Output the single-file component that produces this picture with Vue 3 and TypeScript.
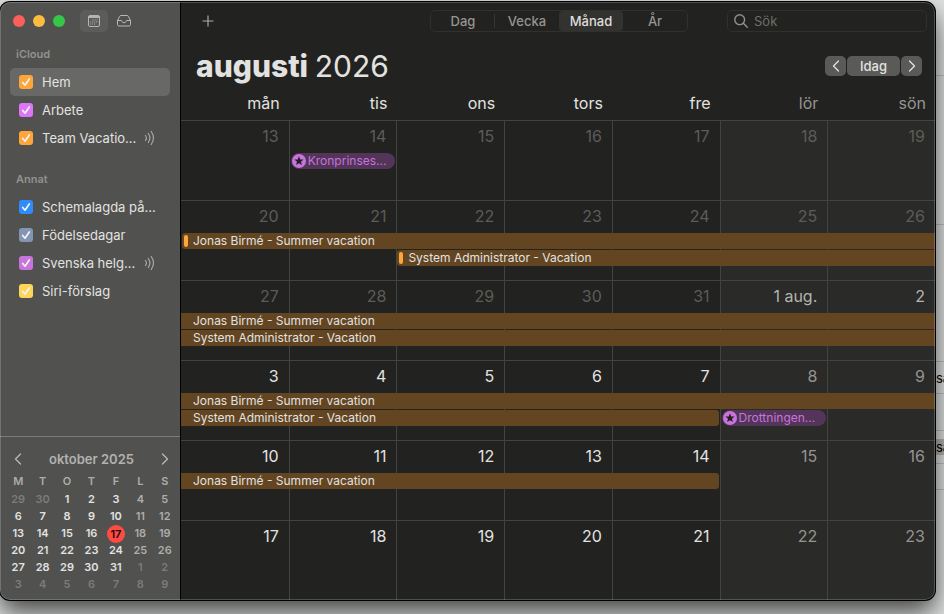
<script setup lang="ts">
interface Calendar {
  name: string
  color: string
  shared?: boolean
  selected?: boolean
}

interface CalendarGroup {
  title: string
  calendars: Calendar[]
}

interface CalendarEvent {
  title: string
  start: number
  span: number
  row: number
  kind: 'bar' | 'holiday'
  begins?: boolean
  ends?: boolean
}

interface Week {
  days: string[]
  muted: number
  events: CalendarEvent[]
}

const groups: CalendarGroup[] = [
  {
    title: 'iCloud',
    calendars: [
      { name: 'Hem', color: '#ffa63a', selected: true },
      { name: 'Arbete', color: '#dc76f7' },
      { name: 'Team Vacatio...', color: '#ffa63a', shared: true },
    ],
  },
  {
    title: 'Annat',
    calendars: [
      { name: 'Schemalagda på...', color: '#2f8cfb' },
      { name: 'Födelsedagar', color: '#8495b3' },
      { name: 'Svenska helg...', color: '#c973dc', shared: true },
      { name: 'Siri-förslag', color: '#fdd559' },
    ],
  },
]

const views: string[] = ['Dag', 'Vecka', 'Månad', 'År']
const activeView = 'Månad'
const weekdays: string[] = ['mån', 'tis', 'ons', 'tors', 'fre', 'lör', 'sön']

const jonas = 'Jonas Birmé - Summer vacation'
const admin = 'System Administrator - Vacation'

// `muted` is the number of leading days that belong to the previous month.
const weeks: Week[] = [
  {
    days: ['13', '14', '15', '16', '17', '18', '19'],
    muted: 7,
    events: [{ title: 'Kronprinses...', start: 2, span: 1, row: 2, kind: 'holiday' }],
  },
  {
    days: ['20', '21', '22', '23', '24', '25', '26'],
    muted: 7,
    events: [
      { title: jonas, start: 1, span: 7, row: 2, kind: 'bar', begins: true },
      { title: admin, start: 3, span: 5, row: 3, kind: 'bar', begins: true },
    ],
  },
  {
    days: ['27', '28', '29', '30', '31', '1 aug.', '2'],
    muted: 5,
    events: [
      { title: jonas, start: 1, span: 7, row: 2, kind: 'bar' },
      { title: admin, start: 1, span: 7, row: 3, kind: 'bar' },
    ],
  },
  {
    days: ['3', '4', '5', '6', '7', '8', '9'],
    muted: 0,
    events: [
      { title: jonas, start: 1, span: 7, row: 2, kind: 'bar' },
      { title: admin, start: 1, span: 5, row: 3, kind: 'bar', ends: true },
      { title: 'Drottningen...', start: 6, span: 1, row: 3, kind: 'holiday' },
    ],
  },
  {
    days: ['10', '11', '12', '13', '14', '15', '16'],
    muted: 0,
    events: [{ title: jonas, start: 1, span: 5, row: 2, kind: 'bar', ends: true }],
  },
  {
    days: ['17', '18', '19', '20', '21', '22', '23'],
    muted: 0,
    events: [],
  },
]

const miniHeads: string[] = ['M', 'T', 'O', 'T', 'F', 'L', 'S']

// Six weeks starting on Monday 29 September 2025.
const miniWeeks = Array.from({ length: 6 }, (_, w) =>
  Array.from({ length: 7 }, (_, d) => {
    const n = w * 7 + d - 1
    return {
      label: n < 1 ? n + 30 : n > 31 ? n - 31 : n,
      outside: n < 1 || n > 31,
      weekend: d > 4,
      today: n === 17,
    }
  }),
)

// Rows of the document that shows behind the window's right edge.
const paperRows: { height: number; text?: string; marked?: boolean }[] = [
  { height: 76 },
  { height: 149 },
  { height: 137 },
  { height: 32, text: 'sa' },
  { height: 37 },
  { height: 33, text: 'sa', marked: true },
  { height: 26 },
]
</script>

<template>
  <div class="desktop">
    <div class="paper" aria-hidden="true">
      <div v-for="(row, i) in paperRows" :key="i" class="paper-row" :style="{ height: row.height + 'px' }">
        <span v-if="row.text" :class="{ marked: row.marked }">{{ row.text }}</span>
      </div>
    </div>

    <div class="window">
      <aside class="sidebar">
        <div class="titlebar">
          <div class="lights">
            <button class="light close" aria-label="Stäng"></button>
            <button class="light minimize" aria-label="Minimera"></button>
            <button class="light expand" aria-label="Zooma"></button>
          </div>
          <button class="tool pressed" aria-label="Kalendrar">
            <svg width="14" height="14" viewBox="0 0 14 14" fill="none">
              <rect x="1.5" y="1.5" width="11" height="11" rx="1.5" stroke="#b4b4b2" />
              <path d="M1.5 2.5h11M1.5 3.5h11" stroke="#b4b4b2" />
              <path d="M5.5 6h6M3 8h8.500M3 10h6" stroke="#a0a09e" stroke-width="1.200" stroke-dasharray="1.200 .8" />
            </svg>
          </button>
          <button class="tool" aria-label="Inkorg">
            <svg width="16" height="14" viewBox="0 0 16 14" fill="none" stroke="#b8b8b6" stroke-linejoin="round">
              <path d="M1.500 6.500 3.600 2.400Q4 1.500 5 1.500h6q1 0 1.400.9l2.100 4.100v4q0 1.500-1.500 1.500H3q-1.500 0-1.500-1.500z" />
              <path d="M1.500 6.500h3.800q.5 0 .6.600.4 1.700 2.100 1.700t2.100-1.700q.1-.6.600-.6h3.800" />
            </svg>
          </button>
        </div>

        <section v-for="group in groups" :key="group.title" class="group">
          <h2>{{ group.title }}</h2>
          <label
            v-for="cal in group.calendars"
            :key="cal.name"
            class="calendar"
            :class="{ selected: cal.selected }"
          >
            <input type="checkbox" checked :style="{ backgroundColor: cal.color }" />
            <span>{{ cal.name }}</span>
            <svg v-if="cal.shared" class="waves" width="12" height="16" viewBox="0 0 12 16" fill="none" stroke="#a9a9a7" stroke-width="1.200" stroke-linecap="round">
              <path d="M1.500 5.500q1.800 2.500 0 5M4.300 3.500q3.200 4.500 0 9M7.200 1.500q4.600 6.500 0 13" />
            </svg>
          </label>
        </section>

        <section class="mini">
          <header>
            <button aria-label="Föregående månad">
              <svg width="8" height="12" viewBox="0 0 8 12"><path d="M6.500 1 1.500 6l5 5" /></svg>
            </button>
            <h3>oktober 2025</h3>
            <button aria-label="Nästa månad">
              <svg width="8" height="12" viewBox="0 0 8 12"><path d="m1.500 1 5 5-5 5" /></svg>
            </button>
          </header>
          <table>
            <thead>
              <tr>
                <th v-for="(h, i) in miniHeads" :key="i">{{ h }}</th>
              </tr>
            </thead>
            <tbody>
              <tr v-for="(week, w) in miniWeeks" :key="w">
                <td v-for="(day, d) in week" :key="d">
                  <span :class="{ outside: day.outside, weekend: day.weekend, today: day.today }">{{ day.label }}</span>
                </td>
              </tr>
            </tbody>
          </table>
        </section>
      </aside>

      <main class="main">
        <div class="toolbar">
          <button class="add" aria-label="Ny aktivitet">
            <svg width="12" height="12" viewBox="0 0 12 12"><path d="M6 .5v11M.5 6h11" stroke="#a9a9a7" stroke-width="1.200" /></svg>
          </button>
          <nav class="views">
            <button v-for="view in views" :key="view" :class="{ active: view === activeView }">{{ view }}</button>
          </nav>
          <label class="search">
            <svg width="14" height="14" viewBox="0 0 14 14" fill="none" stroke="#90908e" stroke-width="1.400" stroke-linecap="round">
              <circle cx="5.700" cy="5.700" r="4.900" />
              <path d="m9.300 9.300 4 4" />
            </svg>
            <input type="search" placeholder="Sök" aria-label="Sök" />
          </label>
        </div>

        <div class="heading">
          <h1>augusti <span>2026</span></h1>
          <div class="pager">
            <button aria-label="Föregående">
              <svg width="8" height="12" viewBox="0 0 8 12"><path d="M6.500 1 1.500 6l5 5" /></svg>
            </button>
            <button class="today-button">Idag</button>
            <button aria-label="Nästa">
              <svg width="8" height="12" viewBox="0 0 8 12"><path d="m1.500 1 5 5-5 5" /></svg>
            </button>
          </div>
        </div>

        <div class="weekdays">
          <span v-for="(day, i) in weekdays" :key="day" :class="{ weekend: i > 4 }">{{ day }}</span>
        </div>

        <div class="month">
          <div v-for="(week, w) in weeks" :key="w" class="week">
            <div
              v-for="(day, d) in week.days"
              :key="d"
              class="day"
              :class="['col-' + (d + 1), { weekend: d > 4, muted: d < week.muted, first: d > 4 && week.muted === 5 }]"
            >
              {{ day }}
            </div>
            <div
              v-for="(event, e) in week.events"
              :key="'e' + e"
              class="event"
              :class="[event.kind, { begins: event.begins, ends: event.ends }]"
              :style="{ gridColumn: `${event.start} / span ${event.span}`, gridRow: event.row }"
            >
              <svg v-if="event.kind === 'holiday'" width="14" height="14" viewBox="0 0 14 14">
                <circle cx="7" cy="7" r="7" fill="#c973dc" />
                <path d="m7 2.300 1.200 3.100 3.400.2L9 7.700l.9 3.400L7 9.200l-2.900 1.900L5 7.700 2.400 5.600l3.400-.2z" fill="#222220" />
              </svg>
              <span>{{ event.title }}</span>
            </div>
          </div>
        </div>
      </main>
    </div>
  </div>
</template>

<style>
body {
  margin: 0;
}
</style>

<style scoped>
.desktop {
  position: relative;
  box-sizing: border-box;
  min-height: 100vh;
  display: flex;
  padding: 2px 9px 14px 0;
  overflow: hidden;
  background: #dfe1e1;
  font-family: Inter, "Liberation Sans", sans-serif;
  color: #e2e2e0;
}

.paper {
  position: absolute;
  top: 0;
  right: 0;
  bottom: 0;
  width: 8px;
  overflow: hidden;
  color: #000;
  font-size: 13px;
}

.paper-row {
  box-sizing: border-box;
  display: flex;
  align-items: center;
  border-bottom: 1px solid #bdbec2;
}

.paper-row .marked {
  background: #b4b4b4;
}

.window {
  position: relative;
  flex: 1;
  display: flex;
  min-width: 0;
  border-radius: 10px;
  overflow: hidden;
  background: #222220;
  box-shadow: 0 0 0 1px #000, 0 12px 26px rgba(0, 0, 0, 0.7);
}

/* Light rim drawn over the content at the window's edge. */
.window::after {
  content: "";
  position: absolute;
  inset: 0;
  border: 1px solid rgba(255, 255, 255, 0.2);
  border-radius: 10px;
  pointer-events: none;
}

button {
  margin: 0;
  padding: 0;
  border: 0;
  background: none;
  color: inherit;
  font: inherit;
  display: flex;
  align-items: center;
  justify-content: center;
}

h1,
h2,
h3 {
  margin: 0;
}

.sidebar {
  flex: 0 0 181px;
  min-width: 0;
  box-sizing: border-box;
  display: flex;
  flex-direction: column;
  border-right: 1px solid #000;
  background: #51514f;
}

.titlebar {
  display: flex;
  align-items: center;
  padding: 8px 0 0 13px;
  height: 22px;
}

.lights {
  display: flex;
  gap: 8px;
  margin-right: 15px;
}

.light {
  width: 12px;
  height: 12px;
  border-radius: 50%;
}

.close {
  background: #ff5f5a;
}

.minimize {
  background: #fdbc40;
}

.expand {
  background: #34c748;
}

.tool {
  width: 28px;
  height: 22px;
  border-radius: 5px;
}

.tool.pressed {
  background: #5c5c5a;
  margin-right: 2px;
}

.group {
  padding: 13px 10px 0;
}

.group + .group {
  padding-top: 18px;
}

.group h2 {
  margin: 0 0 5px 6px;
  font-size: 11px;
  line-height: 18px;
  font-weight: 600;
  color: #929290;
}

.calendar {
  display: flex;
  align-items: center;
  height: 28px;
  padding: 0 14px 0 9px;
  border-radius: 5px;
  font-size: 13px;
  white-space: nowrap;
}

.calendar.selected {
  background: #686866;
}

.calendar input {
  appearance: none;
  flex: none;
  width: 14px;
  height: 14px;
  margin: 0 9px 0 0;
  border-radius: 3px;
  background-image: url("data:image/svg+xml,%3Csvg xmlns='http://www.w3.org/2000/svg' viewBox='0 0 14 14' fill='none' stroke='%23f4f4f4' stroke-width='1.700' stroke-linecap='round' stroke-linejoin='round'%3E%3Cpath d='m3.700 7.500 2.300 2.700 4.300-6.300'/%3E%3C/svg%3E");
}

.waves {
  flex: none;
  margin-left: auto;
}

.mini {
  margin-top: auto;
  padding: 13px 3px 7px 6px;
  border-top: 1px solid #7c7c7a;
}

.mini header {
  display: flex;
  align-items: center;
  justify-content: space-between;
  height: 18px;
  padding: 0 8px;
  margin-bottom: 3px;
}

.mini h3 {
  font-size: 13px;
  font-weight: 600;
  color: #b2b2b0;
}

.mini svg,
.pager svg {
  fill: none;
  stroke: #b8b8b6;
  stroke-width: 1.300;
  stroke-linecap: round;
  stroke-linejoin: round;
}

.mini table {
  width: 100%;
  table-layout: fixed;
  border-collapse: collapse;
  font-size: 11px;
  line-height: 17px;
  font-weight: 600;
  text-align: center;
}

.mini th,
.mini td {
  padding: 0;
  height: 17px;
}

.mini th {
  height: 20px;
  font-weight: 600;
  color: #adadab;
}

.mini td span {
  display: block;
}

.mini .weekend {
  color: #adadab;
}

.mini .outside {
  color: #7c7c7a;
}

.mini .today {
  width: 18px;
  height: 18px;
  line-height: 18px;
  margin: -1px auto;
  border-radius: 50%;
  background: #ff4b42;
  color: #1c0806;
}

.main {
  flex: 1;
  min-width: 0;
  display: flex;
  flex-direction: column;
}

.toolbar {
  display: flex;
  align-items: center;
  height: 22px;
  padding: 8px 8px 0 21px;
}

.views {
  display: grid;
  grid-template-columns: repeat(4, 64px);
  margin-left: auto;
  box-sizing: border-box;
  height: 22px;
  border: 1px solid #30302e;
  border-radius: 5px;
  font-size: 13px;
  font-weight: 500;
  color: #949492;
}

.views button:first-child::after {
  content: "";
  width: 1px;
  height: 14px;
  margin-right: -20px;
  margin-left: 19px;
  background: #363634;
}

.views .active {
  background: #32322f;
  border-radius: 4px;
  color: #dededc;
}

.search {
  display: flex;
  align-items: center;
  gap: 6px;
  box-sizing: border-box;
  width: 200px;
  height: 22px;
  margin-left: 39px;
  padding: 0 6px;
  border: 1px solid #30302e;
  border-radius: 5px;
}

.search input {
  flex: 1;
  min-width: 0;
  padding: 0;
  border: 0;
  outline: 0;
  background: none;
  color: inherit;
  font: 13px Inter, "Liberation Sans", sans-serif;
}

.search input::placeholder {
  color: #6e6e6c;
  opacity: 1;
}

.heading {
  display: flex;
  align-items: center;
  justify-content: space-between;
  height: 40px;
  margin-top: 14px;
  padding: 0 13px 0 15px;
}

h1 {
  font-size: 30px;
  line-height: 40px;
  font-weight: 800;
}

h1 span {
  font-weight: 400;
}

.pager {
  display: flex;
  gap: 1px;
}

.pager button {
  width: 21px;
  height: 20px;
  border-radius: 5px;
  background: #5a5a58;
  font-size: 13px;
  font-weight: 500;
}

.pager .today-button {
  width: 53px;
}

.pager svg {
  stroke: #e2e2e0;
}

.weekdays {
  display: grid;
  grid-template-columns: repeat(7, 1fr);
  height: 34px;
  line-height: 34px;
  font-size: 16px;
  text-align: right;
}

.weekdays span {
  padding-right: 9px;
}

.weekdays .weekend {
  color: #949492;
}

.month {
  flex: 1;
  display: grid;
  grid-template-rows: repeat(6, 1fr);
}

.week {
  display: grid;
  grid-template-columns: repeat(7, 1fr);
  grid-template-rows: 31px 16px 16px 1fr;
  row-gap: 1px;
  border-top: 1px solid #434341;
}

.day {
  grid-row: 1 / -1;
  box-sizing: border-box;
  padding: 4px 10px 0 0;
  border-left: 1px solid #434341;
  font-size: 16px;
  line-height: 22px;
  text-align: right;
}

.col-1 {
  grid-column: 1;
  border-left: 0;
}

.col-2 { grid-column: 2; }
.col-3 { grid-column: 3; }
.col-4 { grid-column: 4; }
.col-5 { grid-column: 5; }
.col-6 { grid-column: 6; }
.col-7 { grid-column: 7; }

.day.weekend {
  background: #2a2a28;
  color: #949492;
}

.day.muted {
  color: #5c5c5a;
}

.day.first {
  color: #b4b4b2;
}

.event {
  display: flex;
  align-items: center;
  min-width: 0;
  font-size: 12px;
  line-height: 16px;
  white-space: nowrap;
}

.bar {
  box-sizing: border-box;
  padding-left: 12px;
  background: #634522;
}

.bar.begins {
  margin-left: 1px;
  padding-left: 2px;
  border-radius: 3px 0 0 3px;
}

.bar.begins::before {
  content: "";
  width: 4px;
  height: 12px;
  margin-right: 5px;
  border-radius: 2px;
  background: #ffa63a;
}

.bar.ends {
  margin-right: 1px;
  border-radius: 0 3px 3px 0;
}

.holiday {
  gap: 2px;
  margin: 0 1px 0 2px;
  padding-left: 1px;
  border-radius: 8px;
  background: #523558;
  color: #c973dc;
}
</style>
